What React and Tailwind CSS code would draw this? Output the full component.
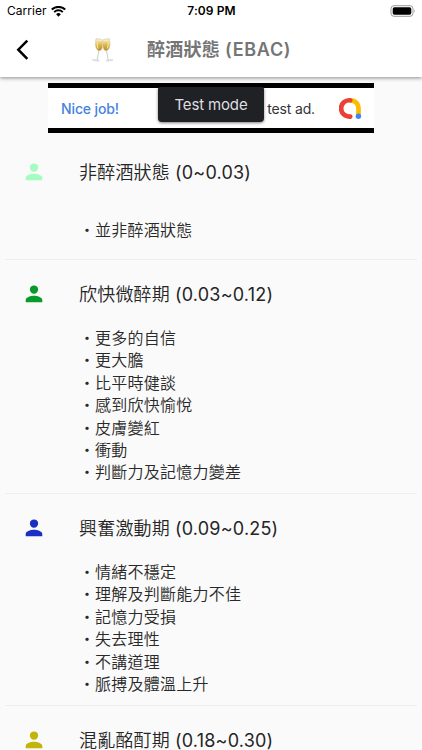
import React from 'react';

const sections = [
  { title: '非醉酒狀態', range: '(0~0.03)', color: 'text-[#a5fbc0]', height: 'h-[127px]', pad: 'pt-[27px]', gap: 'mt-[33px]', items: ['並非醉酒狀態'] },
  {
    title: '欣快微醉期', range: '(0.03~0.12)', color: 'text-[#089b2b]', height: 'h-[234px]', pad: 'pt-[22px]', gap: 'mt-[19px]',
    items: ['更多的自信', '更大膽', '比平時健談', '感到欣快愉悅', '皮膚變紅', '衝動', '判斷力及記憶力變差'],
  },
  {
    title: '興奮激動期', range: '(0.09~0.25)', color: 'text-[#1b2fc4]', height: 'h-[212px]', pad: 'pt-[22px]', gap: 'mt-[19px]',
    items: ['情緒不穩定', '理解及判斷能力不佳', '記憶力受損', '失去理性', '不講道理', '脈搏及體溫上升'],
  },
  { title: '混亂酩酊期', range: '(0.18~0.30)', color: 'text-[#c1b50b]', height: 'h-[80px]', pad: 'pt-[22px]', gap: '', items: [] },
];

function StatusBar() {
  return (
    <div className="flex h-[22px] items-center pl-[7px] pr-[6px] text-black">
      <div className="flex flex-1 items-center gap-[4px]">
        <span className="text-[12px] leading-4 tracking-[0.05px]">Carrier</span>
        <svg width="15" height="11" viewBox="0 0 15 11" fill="none" stroke="currentColor">
          <path d="M.8 3.6a9.7 9.7 0 0 1 13.4 0" strokeWidth="2.1" />
          <path d="M3.2 6.1a6.2 6.2 0 0 1 8.6 0" strokeWidth="2" />
          <path d="M7.5 10.8 5.1 8.3a3.4 3.4 0 0 1 4.8 0Z" fill="currentColor" stroke="none" />
        </svg>
      </div>
      <span className="text-[12px] font-semibold leading-4 tracking-[0.1px]">7:09 PM</span>
      <div className="flex flex-1 justify-end">
        <svg width="26" height="12" viewBox="0 0 26 12">
          <rect x="1" y=".7" width="22" height="10.6" rx="3" fill="#fff" stroke="#999" />
          <rect x="2.7" y="2.3" width="18.6" height="7.4" rx="1.7" />
          <path d="M24.3 4.2q1.5 1.8 0 3.6Z" fill="#999" />
        </svg>
      </div>
    </div>
  );
}

function Champagne() {
  return (
    <svg width="24" height="26" viewBox="0 0 24 26">
      <defs>
        <linearGradient id="wine" x1="0" y1="0" x2="0" y2="1">
          <stop offset="0" stopColor="#f3e6ae" />
          <stop offset=".4" stopColor="#e0bd52" />
          <stop offset="1" stopColor="#b98628" />
        </linearGradient>
      </defs>
      <g id="glass">
        <path d="m7.8 14-1.6 9" stroke="#c8c8c8" strokeWidth=".9" />
        <ellipse cx="4.8" cy="23.3" rx="3.5" ry=".6" transform="rotate(8 4.8 23.3)" fill="#f2f2f2" stroke="#c4c4c4" strokeWidth=".5" />
        <path d="M5 1.6 10.9 2.4C12.5 8 11.8 13.4 8.3 14 4.2 13 3.8 7.2 5 1.6Z" fill="#f3ecd0" stroke="#c6bc96" strokeWidth=".5" />
        <path d="M4.8 3.4 11.1 4c1 5.4-.2 9.1-2.8 9.6C4.8 12.4 4.2 8.5 4.8 3.4Z" fill="url(#wine)" />
        <path d="M6.2 5.3q-.4 4 1.1 6.3" fill="none" stroke="#fff2b8" strokeWidth=".9" />
      </g>
      <use href="#glass" transform="matrix(-1 0 0 1 23.4 0)" />
    </svg>
  );
}

function AdBanner() {
  return (
    <div className="relative mx-auto mt-[6px] flex h-[50px] w-[326px] items-center border-y-[5px] border-black bg-white pl-[13px] pr-[12px]">
      <span className="mr-auto whitespace-nowrap pt-px text-[14px] font-medium leading-5 tracking-[-0.12px] text-[#4583df]">Nice job!</span>
      <span className="mr-[24px] whitespace-nowrap pt-px text-[14px] leading-5 tracking-[-0.15px] text-[#343538]">test ad.</span>
      <svg width="23" height="23" viewBox="0 0 23 23" fill="none" strokeWidth="4.7">
        <path d="M11.2 3.3c5 0 8.3 3.4 8.3 8.4v7" stroke="#fbbc04" />
        <path d="M11.2 3.3A8.2 8.2 0 1 0 11.2 19.6" stroke="#e94235" strokeLinecap="round" />
        <circle cx="19.4" cy="19.3" r="2.7" fill="#4285f4" />
      </svg>
      <div className="absolute left-[110px] top-[-1px] flex h-[35px] w-[106px] items-center justify-center whitespace-nowrap rounded-b-[4px] rounded-t-[2px] bg-[#202124] text-[15px] leading-5 tracking-[-0.15px] text-[#dedfe1] shadow-[0_1px_3px_rgba(0,0,0,.5)]">
        Test mode
      </div>
    </div>
  );
}

function Section({ title, range, color, height, pad, gap, items }) {
  return (
    <section className={`mx-[5px] border-b border-[#eeeeee] ${height} ${pad}`}>
      <div className="flex h-[26px] items-center">
        <svg className={`mb-[2px] ml-[17px] mr-[33px] shrink-0 ${color}`} width="24" height="24" viewBox="0 0 24 24" fill="currentColor">
          <path d="M12 11.7a4.15 4.15 0 1 0 0-8.3 4.15 4.15 0 0 0 0 8.3Zm0 2c-2.8 0-8.3 1.4-8.3 4.2v2.3h16.6v-2.3c0-2.8-5.5-4.2-8.3-4.2Z" />
        </svg>
        <h2 className="flex gap-[5px] whitespace-nowrap text-[18px] font-[350] leading-[26px] tracking-[0.2px] text-[#252525]">
          <span>{title}</span>
          <span className="font-normal tracking-[0.2px]">{range}</span>
        </h2>
      </div>
      <ul className={`ml-[74px] text-[#292929] ${gap}`}>
        {items.map((text) => (
          <li key={text} className="flex h-[22.4px] items-center whitespace-nowrap text-[16px] font-[350] leading-[22.4px] tracking-[0.25px]">
            <span className="w-4">・</span>
            <span>{text}</span>
          </li>
        ))}
      </ul>
    </section>
  );
}

export default function App() {
  return (
    <div className="h-[750px] w-[422px] overflow-hidden bg-[#fafafa] font-['Inter','Noto_Sans_CJK_TC',sans-serif]">
      <header className="relative h-[77px] bg-white shadow-[0_1px_4px_rgba(0,0,0,.45)]">
        <StatusBar />
        <div className="flex h-[55px] items-center">
          <svg className="ml-[15px]" width="16" height="22" viewBox="0 0 16 22" fill="none" stroke="#000" strokeWidth="2.5">
            <path d="m12.3 1.6-9 9.1 9 9.1" />
          </svg>
          <div className="ml-[60px]"><Champagne /></div>
          <h1 className="ml-[32px] flex gap-[5px] text-[18px] font-semibold leading-6 tracking-[0.25px] text-[#757575]">
            <span>醉酒狀態</span>
            <span className="tracking-[0.7px]">(EBAC)</span>
          </h1>
        </div>
      </header>
      <main>
        <AdBanner />
        {sections.map((section) => <Section key={section.title} {...section} />)}
      </main>
    </div>
  );
}
